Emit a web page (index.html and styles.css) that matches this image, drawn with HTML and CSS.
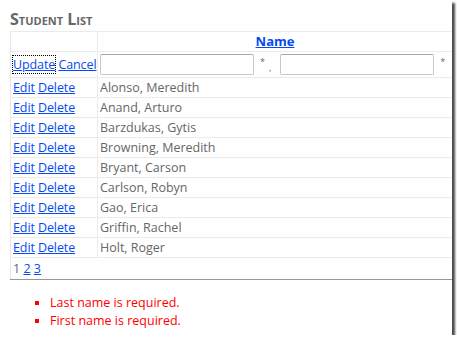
FILE: index.html
```html
<!DOCTYPE html>
<html lang="en">
<head>
    <meta charset="UTF-8">
    <title>Student List</title>
    <link rel="stylesheet" href="styles.css">
</head>
<body>
    <div class="frame">
        <h2>Student List</h2>
        <table class="grid">
            <tr class="head">
                <th class="cmd"></th>
                <th><a href="#">Name</a></th>
            </tr>
            <tr class="edit-row">
                <td class="cmd"><a href="#" class="focused">Update</a> <a href="#">Cancel</a></td>
                <td>
                    <div class="name-edit">
                        <input type="text" class="name-box">
                        <span class="req">*</span>
                        <span class="sep">,</span>
                        <input type="text" class="name-box">
                        <span class="req">*</span>
                    </div>
                </td>
            </tr>
            <tr><td class="cmd"><a href="#">Edit</a> <a href="#">Delete</a></td><td>Alonso, Meredith</td></tr>
            <tr><td class="cmd"><a href="#">Edit</a> <a href="#">Delete</a></td><td>Anand, Arturo</td></tr>
            <tr><td class="cmd"><a href="#">Edit</a> <a href="#">Delete</a></td><td>Barzdukas, Gytis</td></tr>
            <tr><td class="cmd"><a href="#">Edit</a> <a href="#">Delete</a></td><td>Browning, Meredith</td></tr>
            <tr><td class="cmd"><a href="#">Edit</a> <a href="#">Delete</a></td><td>Bryant, Carson</td></tr>
            <tr><td class="cmd"><a href="#">Edit</a> <a href="#">Delete</a></td><td>Carlson, Robyn</td></tr>
            <tr><td class="cmd"><a href="#">Edit</a> <a href="#">Delete</a></td><td>Gao, Erica</td></tr>
            <tr><td class="cmd"><a href="#">Edit</a> <a href="#">Delete</a></td><td>Griffin, Rachel</td></tr>
            <tr><td class="cmd"><a href="#">Edit</a> <a href="#">Delete</a></td><td>Holt, Roger</td></tr>
            <tr class="pager"><td colspan="2">1 <a href="#">2</a> <a href="#">3</a></td></tr>
        </table>
        <ul class="errors">
            <li>Last name is required.</li>
            <li>First name is required.</li>
        </ul>
    </div>
</body>
</html>
```

FILE: styles.css
```css
body {
    margin: 0;
    background-color: #ffffff;
    font-family: "Open Sans", Arial, sans-serif;
    font-size: 12.5px;
    color: #666;
}
.frame {
    width: 452px;
    height: 335px;
    box-sizing: border-box;
    padding: 8px 0 0 10px;
    background-color: #ffffff;
    box-shadow: 3px 3px 2px rgba(0, 0, 0, 0.7);
    overflow: hidden;
}
h2 {
    margin: 0;
    height: 23px;
    font-size: 16px;
    font-weight: bold;
    font-variant: small-caps;
    color: #666;
    line-height: 23px;
}
a {
    color: #034af3;
}
.grid {
    width: 442px;
    border-collapse: collapse;
    border-left: 1px solid #e8e8e8;
}
.grid td, .grid th {
    border-top: 1px solid #ebebeb;
    padding: 0 2px;
    height: 19px;
    line-height: 19px;
    text-align: left;
    white-space: nowrap;
}
.grid .cmd {
    width: 84px;
    padding: 0 0 0 2px;
    border-right: 1px solid #ebebeb;
    letter-spacing: -0.1px;
}
.grid .head th {
    height: 19px;
    text-align: center;
    font-weight: bold;
    font-size: 13px;
}
.grid .head th.cmd {
    text-align: left;
}
.edit-row td {
    height: 24px;
}
.focused {
    outline: 1px dotted #000;
}
.name-edit {
    display: flex;
    align-items: center;
}
.name-box {
    width: 154px;
    height: 21px;
    box-sizing: border-box;
    margin: 0;
    border: 1px solid #c8c8c8;
    border-top-color: #a8a8a8;
    border-radius: 2px;
    font: inherit;
}
.req {
    font-size: 9px;
    margin: -6px 4px 0 6px;
}
.sep {
    margin: 6px 9px 0 0;
    font-size: 9px;
}
.pager td {
    height: 21px;
    border-bottom: 1px solid #999;
}
.errors {
    margin: 14px 0 0;
    padding-left: 40px;
    color: #ff0000;
    list-style: square;
    line-height: 18px;
}
```
